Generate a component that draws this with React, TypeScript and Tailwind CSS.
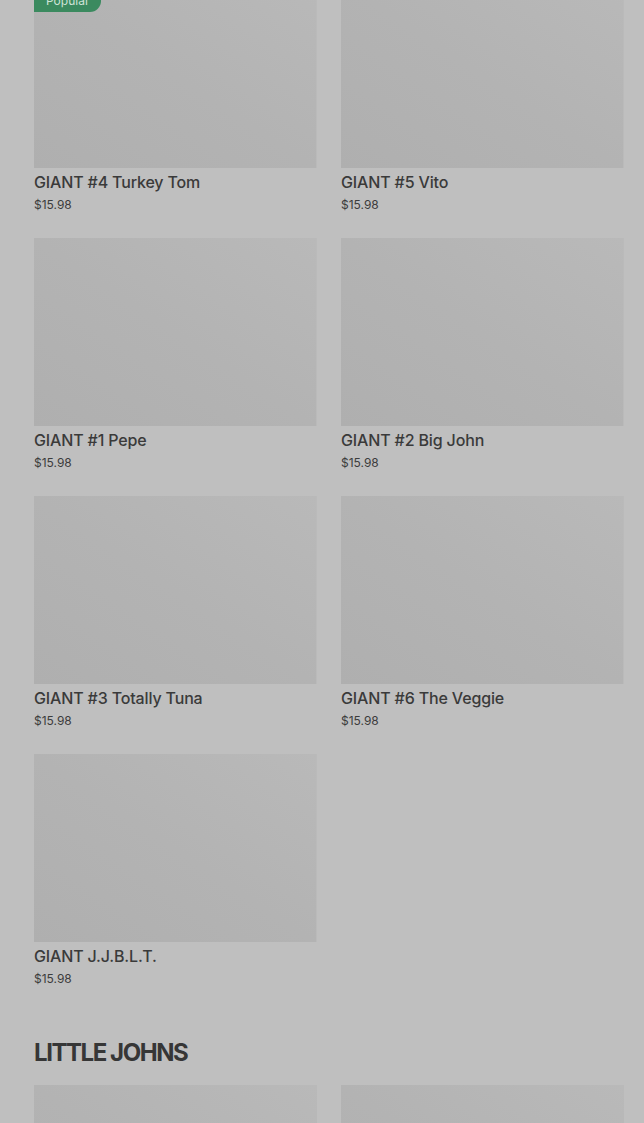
import React from "react";

type Item = { name: string; price: string; popular?: boolean };

const giants: Item[] = [
  { name: "GIANT #4 Turkey Tom", price: "$15.98", popular: true },
  { name: "GIANT #5 Vito", price: "$15.98" },
  { name: "GIANT #1 Pepe", price: "$15.98" },
  { name: "GIANT #2 Big John", price: "$15.98" },
  { name: "GIANT #3 Totally Tuna", price: "$15.98" },
  { name: "GIANT #6 The Veggie", price: "$15.98" },
  { name: "GIANT J.J.B.L.T.", price: "$15.98" },
];

function Card({ item }: { item: Item }) {
  return (
    <div className="flex flex-col">
      <div className="relative h-[188px] bg-gradient-to-tr from-[#afafaf] via-[#b3b3b3] to-[#b9b9b9] border-r border-[#bababa]">
        {item.popular && (
          <div className="absolute left-0 top-[10px] h-[22px] pl-3 pr-3 rounded-r-[12px] bg-[#3b8a5f] text-[#cfe3d7] text-[12px] leading-[22px] font-['Inter',sans-serif]">
            Popular
          </div>
        )}
      </div>
      <div className="mt-[2px] text-[16px] leading-[24px] font-medium text-[#3a3a3a] font-['Inter',sans-serif] tracking-[-0.15px]">
        {item.name}
      </div>
      <div className="mt-[3px] text-[12px] leading-[16px] text-[#3c3c3c] font-['Inter',sans-serif]">
        {item.price}
      </div>
    </div>
  );
}

export default function App() {
  return (
    <div className="min-h-[1123px] h-[1123px] overflow-hidden bg-[#bfbfbf] pl-[34px] pr-[20px]">
      <div className="mt-[-20px] grid grid-cols-2 gap-x-[24px] gap-y-[25px]">
        {giants.map((g) => (
          <Card key={g.name} item={g} />
        ))}
      </div>
      <h2 className="mt-[50px] text-[24px] leading-[32px] font-bold tracking-[-0.06em] text-[#363636] font-['Inter',sans-serif]">
        LITTLE JOHNS
      </h2>
      <div className="mt-[16px] grid grid-cols-2 gap-x-[24px]">
        <div className="h-[188px] bg-gradient-to-tr from-[#afafaf] via-[#b3b3b3] to-[#b9b9b9]" />
        <div className="h-[188px] bg-gradient-to-tr from-[#afafaf] via-[#b3b3b3] to-[#b9b9b9]" />
      </div>
    </div>
  );
}
